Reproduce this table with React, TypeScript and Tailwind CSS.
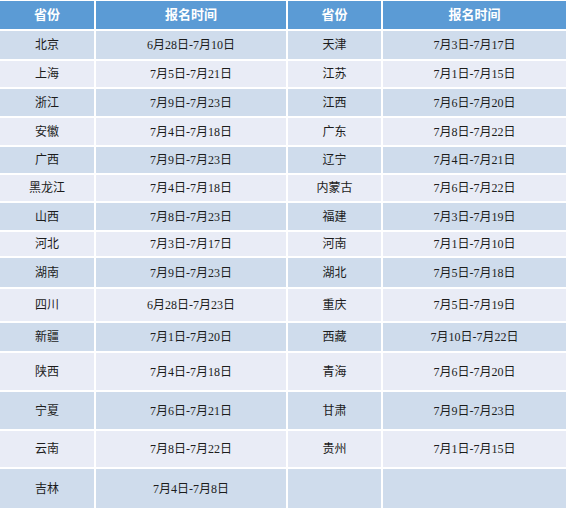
const rows: { h: string; a: [string, string]; b: [string, string] }[] = [
  { h: 'h-[28px]', a: ['北京', '6月28日-7月10日'], b: ['天津', '7月3日-7月17日'] },
  { h: 'h-[26px]', a: ['上海', '7月5日-7月21日'], b: ['江苏', '7月1日-7月15日'] },
  { h: 'h-[27px]', a: ['浙江', '7月9日-7月23日'], b: ['江西', '7月6日-7月20日'] },
  { h: 'h-[27px]', a: ['安徽', '7月4日-7月18日'], b: ['广东', '7月8日-7月22日'] },
  { h: 'h-[26px]', a: ['广西', '7月9日-7月23日'], b: ['辽宁', '7月4日-7月21日'] },
  { h: 'h-[26px]', a: ['黑龙江', '7月4日-7月18日'], b: ['内蒙古', '7月6日-7月22日'] },
  { h: 'h-[27px]', a: ['山西', '7月8日-7月23日'], b: ['福建', '7月3日-7月19日'] },
  { h: 'h-[24px]', a: ['河北', '7月3日-7月17日'], b: ['河南', '7月1日-7月10日'] },
  { h: 'h-[29px]', a: ['湖南', '7月9日-7月23日'], b: ['湖北', '7月5日-7月18日'] },
  { h: 'h-[32px]', a: ['四川', '6月28日-7月23日'], b: ['重庆', '7月5日-7月19日'] },
  { h: 'h-[28px]', a: ['新疆', '7月1日-7月20日'], b: ['西藏', '7月10日-7月22日'] },
  { h: 'h-[37px]', a: ['陕西', '7月4日-7月18日'], b: ['青海', '7月6日-7月20日'] },
  { h: 'h-[37px]', a: ['宁夏', '7月6日-7月21日'], b: ['甘肃', '7月9日-7月23日'] },
  { h: 'h-[36px]', a: ['云南', '7月8日-7月22日'], b: ['贵州', '7月1日-7月15日'] },
  { h: 'h-[39px]', a: ['吉林', '7月4日-7月8日'], b: ['', ''] },
];

const grid = 'grid grid-cols-[94px_190px_93px_1fr] gap-x-[2px]';

export default function App() {
  return (
    <div
      className="w-[566px] h-[508px] bg-white pt-[1px] flex flex-col gap-y-[2px] text-[12px] text-[#1c1c1c]"
      style={{ fontFamily: '"Liberation Serif", "Noto Sans CJK SC", serif' }}
    >
      <div className={`${grid} h-[28px] font-bold text-white text-[13px]`}>
        {['省份', '报名时间', '省份', '报名时间'].map((t, i) => (
          <div key={i} className="bg-[#5b9bd5] flex items-center justify-center">
            {t}
          </div>
        ))}
      </div>
      {rows.map((r, i) => {
        const bg = i % 2 === 0 ? 'bg-[#cfdcec]' : 'bg-[#e9ecf6]';
        return (
          <div key={i} className={`${grid} ${r.h}`}>
            {[...r.a, ...r.b].map((t, j) => (
              <div key={j} className={`${bg} flex items-center justify-center`}>
                {t}
              </div>
            ))}
          </div>
        );
      })}
    </div>
  );
}
